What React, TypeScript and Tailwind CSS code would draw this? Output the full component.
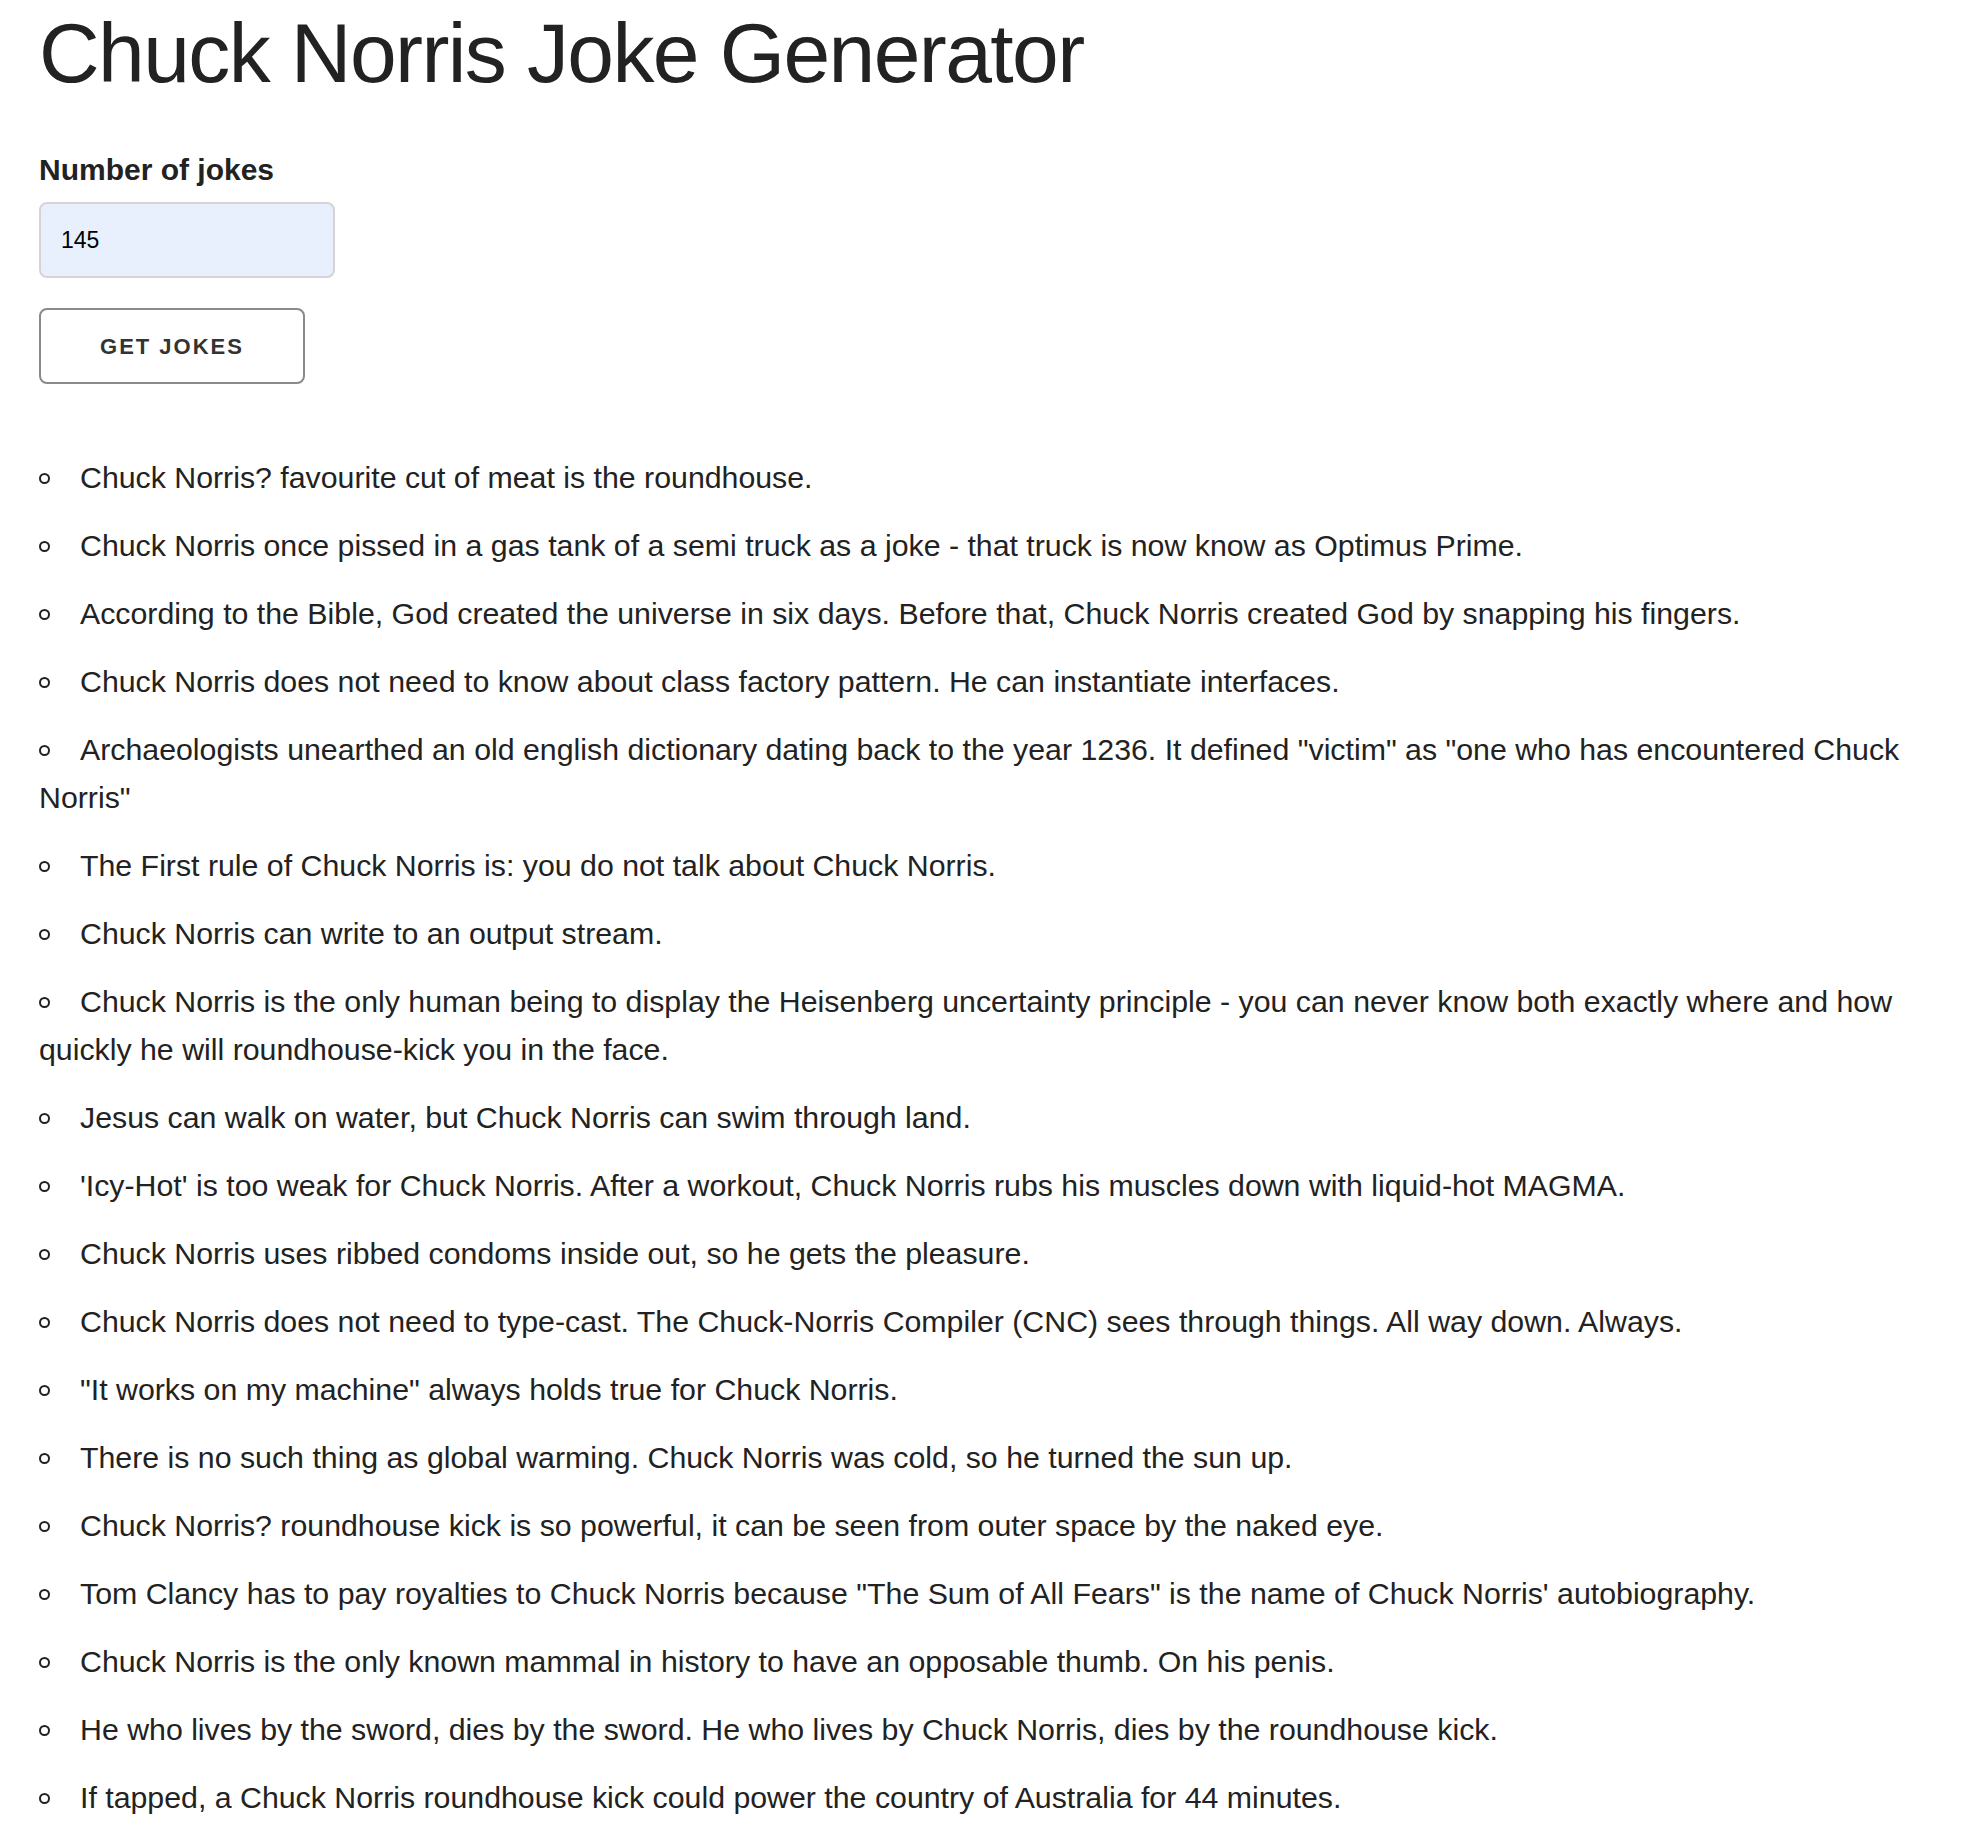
const jokes = [
  "Chuck Norris? favourite cut of meat is the roundhouse.",
  "Chuck Norris once pissed in a gas tank of a semi truck as a joke - that truck is now know as Optimus Prime.",
  "According to the Bible, God created the universe in six days. Before that, Chuck Norris created God by snapping his fingers.",
  "Chuck Norris does not need to know about class factory pattern. He can instantiate interfaces.",
  'Archaeologists unearthed an old english dictionary dating back to the year 1236. It defined "victim" as "one who has encountered Chuck Norris"',
  "The First rule of Chuck Norris is: you do not talk about Chuck Norris.",
  "Chuck Norris can write to an output stream.",
  "Chuck Norris is the only human being to display the Heisenberg uncertainty principle - you can never know both exactly where and how quickly he will roundhouse-kick you in the face.",
  "Jesus can walk on water, but Chuck Norris can swim through land.",
  "'Icy-Hot' is too weak for Chuck Norris. After a workout, Chuck Norris rubs his muscles down with liquid-hot MAGMA.",
  "Chuck Norris uses ribbed condoms inside out, so he gets the pleasure.",
  "Chuck Norris does not need to type-cast. The Chuck-Norris Compiler (CNC) sees through things. All way down. Always.",
  '"It works on my machine" always holds true for Chuck Norris.',
  "There is no such thing as global warming. Chuck Norris was cold, so he turned the sun up.",
  "Chuck Norris? roundhouse kick is so powerful, it can be seen from outer space by the naked eye.",
  "Tom Clancy has to pay royalties to Chuck Norris because \"The Sum of All Fears\" is the name of Chuck Norris' autobiography.",
  "Chuck Norris is the only known mammal in history to have an opposable thumb. On his penis.",
  "He who lives by the sword, dies by the sword. He who lives by Chuck Norris, dies by the roundhouse kick.",
  "If tapped, a Chuck Norris roundhouse kick could power the country of Australia for 44 minutes.",
];

export default function App() {
  return (
    <div className="min-h-[1842px] bg-white px-[39px] text-[#222] font-['Liberation_Sans',Arial,sans-serif]">
      <h1 className="text-[84px] leading-[106px] tracking-[-1.6px] font-normal">
        Chuck Norris Joke Generator
      </h1>

      <label htmlFor="count" className="block mt-[40px] text-[30px] leading-[48px] font-bold">
        Number of jokes
      </label>
      <input
        id="count"
        type="number"
        defaultValue={145}
        className="block mt-[8px] w-[296px] h-[76px] rounded-[8px] border-2 border-[#d4d4d4] bg-[#e8f0fe] pl-[20px] text-[23px] text-black outline-none [appearance:textfield]"
      />

      <button
        type="button"
        className="block mt-[30px] w-[266px] h-[76px] rounded-[8px] border-2 border-[#8a8a8a] bg-white text-[22px] font-bold tracking-[2px] text-[#333]"
      >
        GET JOKES
      </button>

      <ul className="mt-[70px] list-none">
        {jokes.map((joke) => (
          <li key={joke} className="mb-[20px] text-[30.3px] leading-[48px]">
            <span aria-hidden="true" className="inline-block w-[41px] align-middle">
              <span className="block w-[11px] h-[11px] rounded-full border-2 border-[#222] -mt-[4px]" />
            </span>
            {joke}
          </li>
        ))}
      </ul>
    </div>
  );
}
